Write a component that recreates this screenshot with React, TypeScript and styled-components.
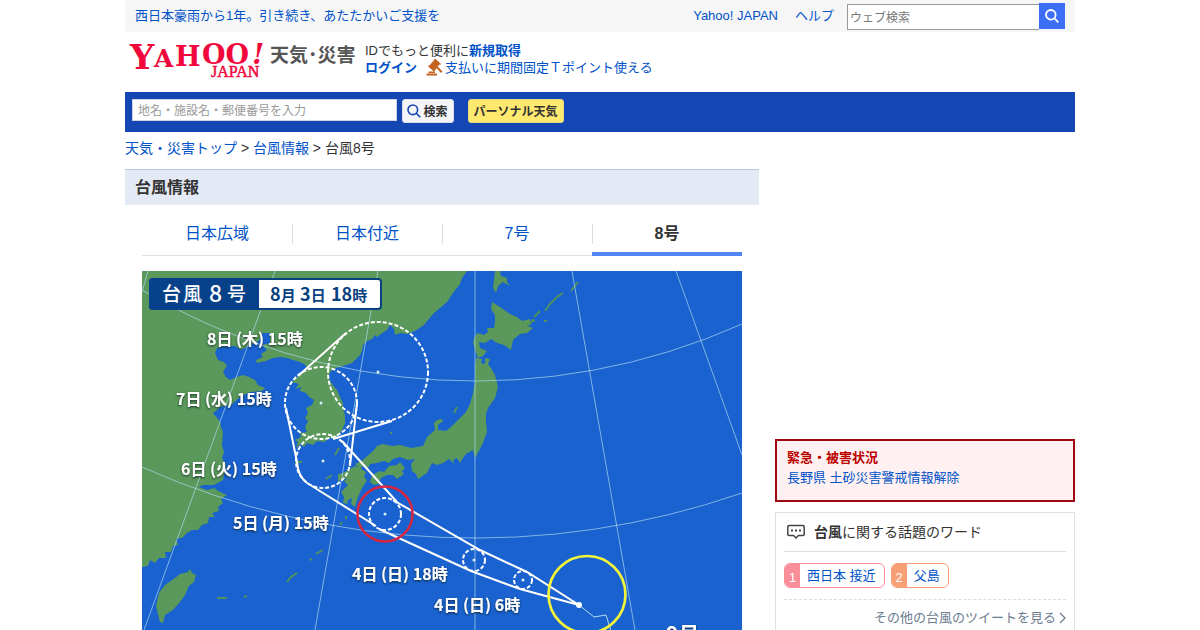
import React from "react";
import styled, { createGlobalStyle } from "styled-components";

const Global = createGlobalStyle`
  * { box-sizing: border-box; }
  body {
    margin: 0;
    background: #fff;
    color: #333;
    font: 13px/18px "Liberation Sans", "Noto Sans CJK JP", sans-serif;
  }
  a { color: #0052c8; text-decoration: none; }
  button, input { font-family: inherit; }
`;

const Page = styled.div`
  max-width: 950px;
  height: 100vh;
  margin: 0 auto;
  overflow: hidden;
`;

const TopBar = styled.div`
  display: flex;
  align-items: center;
  height: 32px;
  padding: 0 10px;
  background: #f6f6f6;
`;
const TopLinks = styled.nav`
  display: flex;
  gap: 17px;
  margin: 0 13px 0 auto;
`;
const WebSearch = styled.form`
  display: flex;
  align-items: center;
  padding-bottom: 1px;
`;
const WebInput = styled.input`
  width: 192px;
  height: 26px;
  margin-top: 2px;
  padding: 2px 2px 0;
  border: 1px solid #999;
  border-right: 0;
  font-size: 12px;
  &::placeholder { color: #777; }
`;
const WebButton = styled.button`
  display: grid;
  place-items: center;
  width: 26px;
  height: 26px;
  padding: 0;
  border: 0;
  background: #3c6ef8;
`;

const Header = styled.header`
  display: flex;
  height: 60px;
  padding: 4px 0 0 4px;
`;
const LogoLink = styled.a`
  width: 236px;
`;
const Account = styled.div`
  line-height: 17px;
  padding-top: 6px;
`;
const AccountRow = styled.div`
  display: flex;
  align-items: center;
`;
const PointLink = styled.a`
  display: flex;
  align-items: center;
  gap: 2px;
  margin-left: 9px;
`;

const SearchBar = styled.div`
  display: flex;
  align-items: flex-start;
  height: 40px;
  padding: 7px;
  background: #1446b4;
`;
const PlaceInput = styled.input`
  width: 265px;
  height: 22px;
  padding: 2px 5px 0;
  border: 1px solid #ccd3e2;
  font-size: 12px;
  &::placeholder { color: #999; }
`;
const BarButton = styled.button<{ $tone: "plain" | "yellow" }>`
  display: flex;
  align-items: center;
  justify-content: center;
  gap: 2px;
  width: ${(p) => (p.$tone === "yellow" ? 96 : 52)}px;
  height: 24px;
  margin-left: ${(p) => (p.$tone === "yellow" ? 14 : 5)}px;
  padding: 0 1px 1px 0;
  border: 1px solid ${(p) => (p.$tone === "yellow" ? "#e9d97c" : "#d8dce6")};
  border-radius: 3px;
  background: ${(p) => (p.$tone === "yellow" ? "#ffe96e" : "#f4f5f8")};
  color: #333;
  font-size: 12px;
  font-weight: bold;
  white-space: nowrap;
`;

const Crumbs = styled.nav`
  height: 37px;
  padding-top: 7px;
  font-size: 14px;
`;

const Columns = styled.div`
  display: flex;
  gap: 16px;
`;
const Main = styled.main`
  flex: 1;
  min-width: 0;
`;
const Heading = styled.h1`
  margin: 0;
  height: 36px;
  padding: 0 10px;
  border-top: 1px solid #b9c4d8;
  background: #e3e9f5;
  font-size: 16px;
  line-height: 36px;
`;
const Tabs = styled.nav`
  display: flex;
  margin: 6px 17px 15px;
`;
const Tab = styled.a<{ $active?: boolean }>`
  position: relative;
  flex: 1;
  height: 45px;
  border-bottom: ${(p) => (p.$active ? "4px solid #5286f5" : "1px solid #e0e0e0")};
  color: ${(p) => (p.$active ? "#333" : "#0052c8")};
  font-size: 16px;
  font-weight: ${(p) => (p.$active ? "bold" : "normal")};
  line-height: 46px;
  text-align: center;
  &:not(:first-child)::before {
    content: "";
    position: absolute;
    top: 13px;
    left: 0;
    height: 20px;
    border-left: 1px solid #ddd;
  }
`;
const MapFrame = styled.figure`
  margin: 0 17px;
  svg { display: block; width: 100%; height: auto; }
`;

const Side = styled.aside`
  width: 300px;
`;
const AdSlot = styled.div`
  height: 250px;
  margin-bottom: 20px;
`;
const Alert = styled.section`
  height: 63px;
  margin-bottom: 10px;
  padding: 7px 10px;
  border: 2px solid #9e0a14;
  background: #fff1f1;
  line-height: 20px;
`;
const AlertTitle = styled.h2`
  margin: 0;
  color: #b00;
  font-size: 13px;
`;
const Topics = styled.section`
  padding: 0 8px 20px;
  border: 1px solid #e0e0e0;
`;
const TopicsTitle = styled.h2`
  display: flex;
  align-items: center;
  gap: 8px;
  height: 39px;
  margin: 0;
  padding-left: 2px;
  border-bottom: 1px solid #ddd;
  font-size: 14px;
  font-weight: normal;
`;
const Words = styled.div`
  display: flex;
  gap: 6px;
  padding: 11px 0;
  border-bottom: 1px dashed #ddd;
`;
const Word = styled.a<{ $color: string }>`
  display: flex;
  height: 25px;
  overflow: hidden;
  border: 1px solid ${(p) => p.$color};
  border-radius: 6px;
  line-height: 24px;
  padding-right: 8px;
`;
const Rank = styled.span<{ $color: string }>`
  width: 15px;
  margin-right: 7px;
  background: ${(p) => p.$color};
  color: #fff;
  line-height: 27px;
  text-align: center;
`;
const MoreLink = styled.a`
  display: flex;
  align-items: center;
  justify-content: flex-end;
  gap: 3px;
  padding-top: 9px;
  && { color: #6b7c8f; }
`;

const Lens = ({ size, color, width }: { size: number; color: string; width: number }) => (
  <svg width={size} height={size} viewBox="0 0 14 14" fill="none" stroke={color} strokeWidth={width} aria-hidden="true">
    <circle cx="5.8" cy="5.8" r="4.8" />
    <path d="M9.2 9.2 13.3 13.3" />
  </svg>
);

const Logo = () => (
  <svg width="232" height="46" viewBox="129 36 232 46" role="img" aria-label="Yahoo! JAPAN 天気・災害">
    <text x="130" y="69" fontSize="34" fontFamily="DejaVu Serif" fontWeight="bold" fill="#f0083c">
      Y<tspan x="154" y="67" fontSize="25">A</tspan><tspan x="175" y="66" fontSize="27">H</tspan><tspan x="202" y="64" fontSize="27">OO</tspan><tspan x="252" y="64" fontSize="28" fontStyle="italic">!</tspan>
    </text>
    <text x="211" y="77" fontSize="16" fontFamily="Liberation Serif" fill="#f0083c" stroke="#f0083c" strokeWidth="0.500">JAPAN</text>
    <text x="270" y="62" fontSize="19" fontFamily="Noto Sans CJK JP" fontWeight="bold" fill="#555">天気･災害</text>
  </svg>
);

const Gavel = () => (
  <svg width="17" height="17" viewBox="0 0 17 17" aria-hidden="true">
    <g fill="#c3631f">
      <path d="M9 0 14 4.500 8.500 12 3 7z" />
      <path d="m8 .5 1-1 6 5.500-1 1zM2 7.300l1-1 6 5.500-1 1z" />
      <path d="m10 8.500 1.300-1.400 5.200 5.400-1.600 1.500z" />
      <path d="M2.500 12.500H9V14H2.500zM.5 14.500H11v2H.5z" />
    </g>
  </svg>
);

const Bubble = () => (
  <svg width="20" height="16" viewBox="0 0 20 16" fill="none" stroke="#444" strokeWidth="1.500" aria-hidden="true">
    <path d="M3 1.500h14q1.200 0 1.200 1.200v7.600q0 1.200-1.200 1.200h-4.500L10 14l-2.500-2.500H3q-1.200 0-1.200-1.200V2.700Q1.800 1.500 3 1.500z" />
    <path d="M5 6.500h2M9 6.500h2M13 6.500h2" strokeWidth="2" />
  </svg>
);

const mainland =
  "M142 271H467L462 278 460 284 453 293 447 302 440 308 434 313 428 320 424 325 415 331 407 334 400 333 395 335 394 329 390 325 387 330 381 334 377 337 375 335 372 339 367 341 363 345 362 351 360 355 355 360 352 363 343 366 336 368 331 371 328 377 332 384 337 390 340 397 343 403 343 409 345 415 345 423 343 428 340 434 335 438 328 438 325 442 317 441 313 445 307 443 304 447 301 444 296 448 298 442 295 440 301 437 300 433 307 432 305 427 308 421 305 418 308 413 306 408 312 405 314 400 309 397 306 393 300 391 301 387 295 389 299 384 292 382 297 377 304 372 308 368 304 364 300 362 293 360 287 358 280 357 273 358 266 361 257 363 256 360 263 357 261 354 267 350 262 345 270 343 270 333 262 333 260 340 250 345 241 350 235 346 228 346 217 348 215 353 218 360 224 362 227 366 223 372 226 377 230 380 237 377 243 375 249 377 255 380 258 385 265 388 262 391 250 392 240 397 231 405 220 407 216 411 213 413 218 419 220 422 221 427 223 432 222 445 224 452 222 458 226 465 224 474 223 480 214 485 203 485 199 487 207 490 214 488 220 492 227 495 221 499 223 503 218 507 219 511 212 513 215 517 209 517 208 523 202 525 198 530 192 530 187 533 182 538 176 539 178 545 173 546 171 552 165 552 166 558 159 558 155 563 150 560 148 566 142 567z";
const islands = [
  "M475 365 476 358 482 359 481 363 485 364 485 358 490 359 488 364 491 368 495 375 498 387 495 398 488 408 486 414 486 422 487 432 483 443 480 449 475 458 473 450 466 454 463 458 460 463 457 458 453 460 454 464 449 459 443 463 437 465 432 463 427 473 418 479 416 474 412 471 411 464 415 459 408 460 400 457 393 459 389 463 384 461 377 463 370 464 368 468 363 466 360 469 355 464 362 461 366 457 373 451 377 446 383 444 392 446 400 445 411 448 423 446 427 437 435 430 434 423 437 420 442 419 443 421 438 425 438 430 446 431 452 426 460 418 466 412 470 404 473 393 475 380z",
  "M370 482 372 475 380 471 384 472 389 466 397 465 400 462 405 468 402 471 404 474 397 479 393 475 387 475 381 478 378 484 374 485z",
  "M343 473 350 469 355 466 360 468 366 472 364 477 367 480 361 490 357 500 355 507 351 504 352 498 347 501 348 504 343 503 344 497 341 492 345 488 348 485 344 481 347 478 340 480 338 482 338 474z",
  "M492 302 500 307 510 314 517 317 522 321 530 319 531 325 527 326 533 328 527 333 520 334 513 340 511 350 504 345 497 343 491 339 485 343 479 342 480 348 487 351 483 356 478 358 475 350 473 342 475 336 478 333 484 335 488 332 487 328 494 328 495 322 495 315 491 309z",
  "M495 271H500L501 276 507 278 507 282 510 286 503 282 498 286 496 293 493 288z",
  "M180 574 188 572 190 569 192 573 196 575 194 582 189 586 185 595 180 602 173 610 165 615 163 623 160 622 158 614 156 606 159 593 165 585 171 581z",
];
const isles =
  "M454 413l3-6 M390 433h2 M335 455l4-7 M295 462h7 M326 479l6-4 M340 525l2-3 M346 516v3 M287 582l4-5 6-4 M310 560l2-1 M316 554l7-4 M217 598h10 M244 597l3-1 M529 325l4-5 2 1 M534 317l6-6 M545 311l5-7 7-7 6-4 M571 291l7-9 M544 321h3";

const dashed = [
  [378, 372, 50],
  [321, 403, 36],
  [323, 461, 27],
  [385, 514, 16],
  [474, 560, 11],
  [523, 580, 9],
];
const labels: [number, number, string][] = [
  [207, 345, "8日 (木) 15時"],
  [176, 405, "7日 (水) 15時"],
  [181, 475, "6日 (火) 15時"],
  [233, 529, "5日 (月) 15時"],
  [352, 580, "4日 (日) 18時"],
  [434, 611, "4日 (日) 6時"],
];

const TyphoonMap = () => (
  <svg viewBox="142 271 600 450" role="img" aria-label="台風8号の進路図">
    <defs>
      <filter id="shade" x="-10%" y="-30%" width="120%" height="170%">
        <feDropShadow dx="0" dy="1" stdDeviation="1.200" floodColor="#122" floodOpacity="0.850" />
      </filter>
    </defs>
    <path d="M142 271h600v450H142z" fill="#1962cf" />
    <g fill="#5a985b">
      <path d={mainland} />
      {islands.map((d) => <path key={d} d={d} />)}
    </g>
    <path d={isles} fill="none" stroke="#4f915f" strokeWidth="2" />
    <g fill="none" stroke="#b5dcf0" strokeOpacity="0.750" strokeWidth="0.900">
      <path d="M148 271 142 292M275 271 144 630M378 271 315 630 299 721M475 271V721M572 271 635 630 651 721M676 271 742 455" />
      <path d="M142 290A654 654 0 0 0 742 324M142 467A815 815 0 0 0 742 493" />
    </g>
    <g fill="none" stroke="#fff" strokeWidth="2">
      {dashed.map(([x, y, r]) => <circle key={x} cx={x} cy={y} r={r} strokeDasharray="4 2" />)}
      <path d="M346 333 298 376M392 421 333 439M286 408 297 462M357 403 350 466M342 441 397 502M307 483 376 526M393 500 480 550 527 572 579 605 520 589 471 571 379 529" />
      <path d="M297 462Q298 476 307 483" />
      <path d="M579 605 594 617 606 615 611 631 615 645" strokeWidth="1" stroke="#b5dcf0" />
    </g>
    <g fill="#d8f0f8">
      {dashed.map(([x, y]) => <circle key={x} cx={x} cy={y} r="1.500" />)}
    </g>
    <circle cx="385" cy="514" r="27.500" fill="none" stroke="#d7263f" strokeWidth="2.500" />
    <circle cx="587" cy="594.500" r="38.500" fill="none" stroke="#f4f53a" strokeWidth="2.700" />
    <circle cx="579" cy="605" r="3" fill="#fff" />
    <g fill="#fff" fontFamily="Noto Sans CJK JP" fontWeight="bold" fontSize="16" filter="url(#shade)">
      {labels.map(([x, y, t]) => <text key={t} x={x} y={y}>{t}</text>)}
      <text x="666" y="642" fontSize="21">9号</text>
    </g>
    <rect x="150" y="279" width="231" height="30" rx="3" fill="#fff" stroke="#07417f" strokeWidth="2" />
    <path d="M259 278H153q-4 0-4 4v24q0 4 4 4h106z" fill="#07418a" />
    <g fontFamily="Noto Sans CJK JP">
      <g fill="#fff" fontSize="19" fontWeight="500">
        <text x="162" y="301">台</text>
        <text x="183" y="301">風</text>
        <text x="209" y="302" fontSize="23">8</text>
        <text x="227" y="301">号</text>
      </g>
      <g fill="#07417f" fontSize="18" fontWeight="bold">
        <text x="270" y="301">8<tspan fontSize="15">月</tspan></text>
        <text x="300" y="301">3<tspan fontSize="15">日</tspan></text>
        <text x="331" y="301">18<tspan fontSize="15">時</tspan></text>
      </g>
    </g>
  </svg>
);

export default function App() {
  return (
    <Page>
      <Global />
      <TopBar>
        <a href="#support">西日本豪雨から1年。引き続き、あたたかいご支援を</a>
        <TopLinks>
          <a href="#yahoo">Yahoo! JAPAN</a>
          <a href="#help">ヘルプ</a>
        </TopLinks>
        <WebSearch>
          <WebInput type="text" placeholder="ウェブ検索" aria-label="ウェブ検索" />
          <WebButton type="button" aria-label="検索">
            <Lens size={14} color="#fff" width={1.8} />
          </WebButton>
        </WebSearch>
      </TopBar>
      <Header>
        <LogoLink href="#top"><Logo /></LogoLink>
        <Account>
          <div>IDでもっと便利に<a href="#new"><b>新規取得</b></a></div>
          <AccountRow>
            <a href="#login"><b>ログイン</b></a>
            <PointLink href="#points"><Gavel />支払いに期間固定Ｔポイント使える</PointLink>
          </AccountRow>
        </Account>
      </Header>
      <SearchBar>
        <PlaceInput type="text" placeholder="地名・施設名・郵便番号を入力" aria-label="地名・施設名・郵便番号" />
        <BarButton type="button" $tone="plain"><Lens size={14} color="#1446b4" width={1.6} />検索</BarButton>
        <BarButton type="button" $tone="yellow">パーソナル天気</BarButton>
      </SearchBar>
      <Crumbs aria-label="パンくず">
        <a href="#weather">天気・災害トップ</a> &gt; <a href="#typhoon">台風情報</a> &gt; 台風8号
      </Crumbs>
      <Columns>
        <Main>
          <Heading>台風情報</Heading>
          <Tabs>
            <Tab href="#wide">日本広域</Tab>
            <Tab href="#near">日本付近</Tab>
            <Tab href="#t7">7号</Tab>
            <Tab href="#t8" $active aria-current="page">8号</Tab>
          </Tabs>
          <MapFrame><TyphoonMap /></MapFrame>
        </Main>
        <Side>
          <AdSlot />
          <Alert>
            <AlertTitle>緊急・被害状況</AlertTitle>
            <a href="#nagano">長野県 土砂災害警戒情報解除</a>
          </Alert>
          <Topics>
            <TopicsTitle><Bubble /><span><b>台風</b>に関する話題のワード</span></TopicsTitle>
            <Words>
              <Word href="#w1" $color="#f98d98"><Rank $color="#f98d98">1</Rank>西日本 接近</Word>
              <Word href="#w2" $color="#f8a075"><Rank $color="#f8a075">2</Rank>父島</Word>
            </Words>
            <MoreLink href="#more">
              その他の台風のツイートを見る
              <svg width="7" height="12" viewBox="0 0 7 12" fill="none" stroke="#6b7c8f" strokeWidth="1.300" aria-hidden="true"><path d="m1 1 5 5-5 5" /></svg>
            </MoreLink>
          </Topics>
        </Side>
      </Columns>
    </Page>
  );
}
